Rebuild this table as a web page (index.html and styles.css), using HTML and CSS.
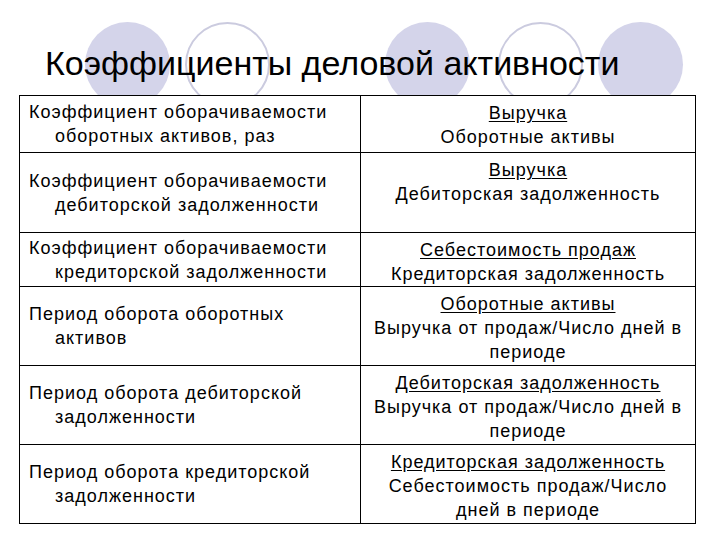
FILE: index.html
```html
<!DOCTYPE html>
<html lang="ru">
<head>
<meta charset="utf-8">
<link rel="stylesheet" href="styles.css">
</head>
<body>
<div class="slide">
  <div class="decor">
    <span class="circle fill c1"></span>
    <span class="circle ring c2"></span>
    <span class="circle fill c3"></span>
    <span class="circle ring c4"></span>
    <span class="circle fill c5"></span>
  </div>
  <h1 class="title">Коэффициенты деловой активности</h1>
  <table class="ratios">
    <colgroup><col class="col-name"><col class="col-formula"></colgroup>
    <tr class="r-a">
      <td class="name">Коэффициент оборачиваемости<br>оборотных активов, раз</td>
      <td class="formula"><u>Выручка</u><br>Оборотные активы</td>
    </tr>
    <tr class="r-b">
      <td class="name">Коэффициент оборачиваемости<br>дебиторской задолженности</td>
      <td class="formula"><u>Выручка</u><br>Дебиторская задолженность</td>
    </tr>
    <tr class="r-c">
      <td class="name">Коэффициент оборачиваемости<br>кредиторской задолженности</td>
      <td class="formula"><u>Себестоимость продаж</u><br>Кредиторская задолженность</td>
    </tr>
    <tr class="r-d">
      <td class="name">Период оборота оборотных<br>активов</td>
      <td class="formula"><u>Оборотные активы</u><br>Выручка от продаж/Число дней в<br>периоде</td>
    </tr>
    <tr class="r-d">
      <td class="name">Период оборота дебиторской<br>задолженности</td>
      <td class="formula"><u>Дебиторская задолженность</u><br>Выручка от продаж/Число дней в<br>периоде</td>
    </tr>
    <tr class="r-d">
      <td class="name">Период оборота кредиторской<br>задолженности</td>
      <td class="formula"><u>Кредиторская задолженность</u><br>Себестоимость продаж/Число<br>дней в периоде</td>
    </tr>
  </table>
</div>
</body>
</html>
```
FILE: styles.css
```css
html, body {
  margin: 0;
  padding: 0;
  background: #ffffff;
}
body {
  font-family: "Liberation Sans", Arial, sans-serif;
  color: #000;
}
.slide {
  position: relative;
  width: 720px;
  height: 540px;
  overflow: hidden;
}
.decor {
  position: absolute;
  inset: 0;
  z-index: 0;
}
.circle {
  position: absolute;
  top: 22px;
  width: 85px;
  height: 85px;
  border-radius: 50%;
  box-sizing: border-box;
}
.circle.fill { background: #d4d4ea; }
.circle.ring { border: 2px solid #cbcbdf; background: #fff; }
.c1 { left: 85px; }
.c2 { left: 185px; }
.c3 { left: 385px; }
.c4 { left: 498px; }
.c5 { left: 598px; }

.title {
  position: relative;
  z-index: 1;
  margin: 0;
  padding: 43px 0 0 45px;
  height: 40px;
  line-height: 40px;
  font-size: 34px;
  font-weight: normal;
}
.ratios {
  position: relative;
  z-index: 1;
  margin: 12px 0 0 19px;
  width: 676px;
  border-collapse: collapse;
  table-layout: fixed;
  background: #fff;
  font-size: 18px;
  letter-spacing: 1px;
  line-height: 24px;
}
.col-name { width: 341px; }
.col-formula { width: 335px; }
.ratios td {
  border: 1px solid #000;
  padding: 0;
}
.name {
  vertical-align: middle;
  padding: 0 4px 0 35px !important;
  text-indent: -26px;
}
.formula {
  vertical-align: top;
  text-align: center;
  padding: 5px 2px 0 2px !important;
}
.formula u { text-underline-offset: 2px; }
.r-a { height: 57px; }
.r-b { height: 80px; }
.r-c { height: 54px; }
.r-d { height: 79px; }
```
